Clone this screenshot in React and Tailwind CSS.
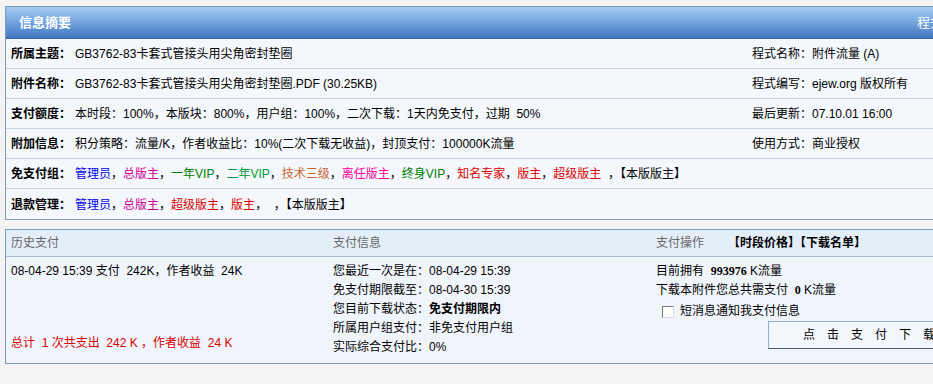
import React from "react";

const F = "font-['Liberation_Sans','Noto_Sans_CJK_SC',sans-serif]";

function Row({ label, children, right, last }) {
  return (
    <div
      className={`grid grid-cols-[741px_1fr] h-[30px] items-center ${
        last ? "" : "border-b border-[#c3d2e4]"
      }`}
    >
      <div className="pl-[5px] pt-[2px] whitespace-nowrap">
        <b className="font-bold mr-[4px]">{label}</b>
        {children}
      </div>
      <div className="pl-[5px] pt-[2px] whitespace-nowrap">{right}</div>
    </div>
  );
}

const C = {
  blue: "text-[#0000ee]",
  mag: "text-[#cc0099]",
  green: "text-[#008000]",
  green2: "text-[#009933]",
  brown: "text-[#cc6633]",
  pink: "text-[#ff0099]",
  red: "text-[#dd0000]",
};

export default function App() {
  return (
    <div
      className={`w-[933px] h-[384px] overflow-hidden bg-[#f4f4f4] text-[12px] leading-[19px] text-black ${F}`}
    >
      <div className="pt-[6px] pl-[5px]">
        {/* Top box */}
        <div className="w-[1000px] border border-[#7f9db9] bg-[#f4f7fb]">
          <div className="flex h-[32px] items-center bg-gradient-to-b from-[#a8ccf2] via-[#72a3de] to-[#4277c0] border-b border-[#3a67a6] text-white text-[13px]">
            <div className="w-[911px] pl-[13px] font-bold">信息摘要</div>
            <div>程式说明</div>
          </div>
          <Row label="所属主题：" right="程式名称：附件流量 (A)">
            GB3762-83卡套式管接头用尖角密封垫圈
          </Row>
          <Row label="附件名称：" right="程式编写：ejew.org 版权所有">
            GB3762-83卡套式管接头用尖角密封垫圈.PDF (30.25KB)
          </Row>
          <Row label="支付额度：" right="最后更新：07.10.01 16:00">
            本时段：100%，本版块：800%，用户组：100%，二次下载：1天内免支付，过期&nbsp; 50%
          </Row>
          <Row label="附加信息：" right="使用方式：商业授权">
            积分策略：流量/K，作者收益比：10%(二次下载无收益)，封顶支付：100000K流量
          </Row>
          <Row label="免支付组：" right="">
            <span className={C.blue}>管理员</span>，
            <span className={C.mag}>总版主</span>，
            <span className={C.green}>一年VIP</span>，
            <span className={C.green2}>二年VIP</span>，
            <span className={C.brown}>技术三级</span>，
            <span className={C.pink}>离任版主</span>，
            <span className={C.green}>终身VIP</span>，
            <span className={C.red}>知名专家</span>，
            <span className={C.red}>版主</span>，
            <span className={C.red}>超级版主</span>&nbsp; ，【本版版主】
          </Row>
          <Row label="退款管理：" right="" last>
            <span className={C.blue}>管理员</span>，
            <span className={C.mag}>总版主</span>，
            <span className={C.red}>超级版主</span>，
            <span className={C.red}>版主</span>，&nbsp; ，【本版版主】
          </Row>
        </div>

        {/* Bottom box */}
        <div className="mt-[9px] w-[1000px] border border-[#7f9db9] bg-[#f0f5fb]">
          <div className="grid grid-cols-[321px_323px_1fr] h-[27px] items-center bg-[#e4eef9] border-b border-[#a9bcd3] text-[#666]">
            <div className="pl-[5px]">历史支付</div>
            <div className="pl-[6px]">支付信息</div>
            <div className="pl-[6px] flex">
              <span>支付操作</span>
              <b className="ml-[24px] font-bold text-black">【时段价格】【下载名单】</b>
            </div>
          </div>
          <div className="grid grid-cols-[321px_323px_1fr] h-[106px]">
            <div className="pl-[5px] pt-[5px] pb-[10px] flex flex-col whitespace-nowrap">
              <div>08-04-29 15:39 支付&nbsp; 242K，作者收益&nbsp; 24K</div>
              <div className="mt-auto text-[#dd0000]">
                总计&nbsp; 1 次共支出&nbsp; 242 K ，作者收益&nbsp; 24 K
              </div>
            </div>
            <div className="pl-[6px] pt-[5px] whitespace-nowrap">
              <div>您最近一次是在：08-04-29 15:39</div>
              <div>免支付期限截至：08-04-30 15:39</div>
              <div>
                您目前下载状态：<b className="font-bold">免支付期限内</b>
              </div>
              <div>所属用户组支付：非免支付用户组</div>
              <div>实际综合支付比：0%</div>
            </div>
            <div className="pl-[6px] pt-[5px] whitespace-nowrap">
              <div>
                目前拥有&nbsp;{" "}
                <b className="font-bold font-['Liberation_Serif',serif]">993976</b> K流量
              </div>
              <div>
                下载本附件您总共需支付&nbsp;{" "}
                <b className="font-bold font-['Liberation_Serif',serif]">0</b> K流量
              </div>
              <div className="flex items-center h-[19px] pl-[6px] mt-[2px]">
                <span className="inline-block w-[12px] h-[12px] bg-white border border-t-[#7a7a7a] border-l-[#7a7a7a] border-b-[#dcdcdc] border-r-[#dcdcdc]"></span>
                <span className="ml-[6px]">短消息通知我支付信息</span>
              </div>
              <div className="ml-[112px] h-[28px] w-[200px] flex items-center border border-t-[#8fb0d8] border-l-[#8fb0d8] border-b-[#4d5d70] border-r-[#4d5d70] bg-[#f3f7fb] pl-[34px] tracking-[12px]">
                点击支付下载
              </div>
            </div>
          </div>
        </div>
      </div>
    </div>
  );
}
